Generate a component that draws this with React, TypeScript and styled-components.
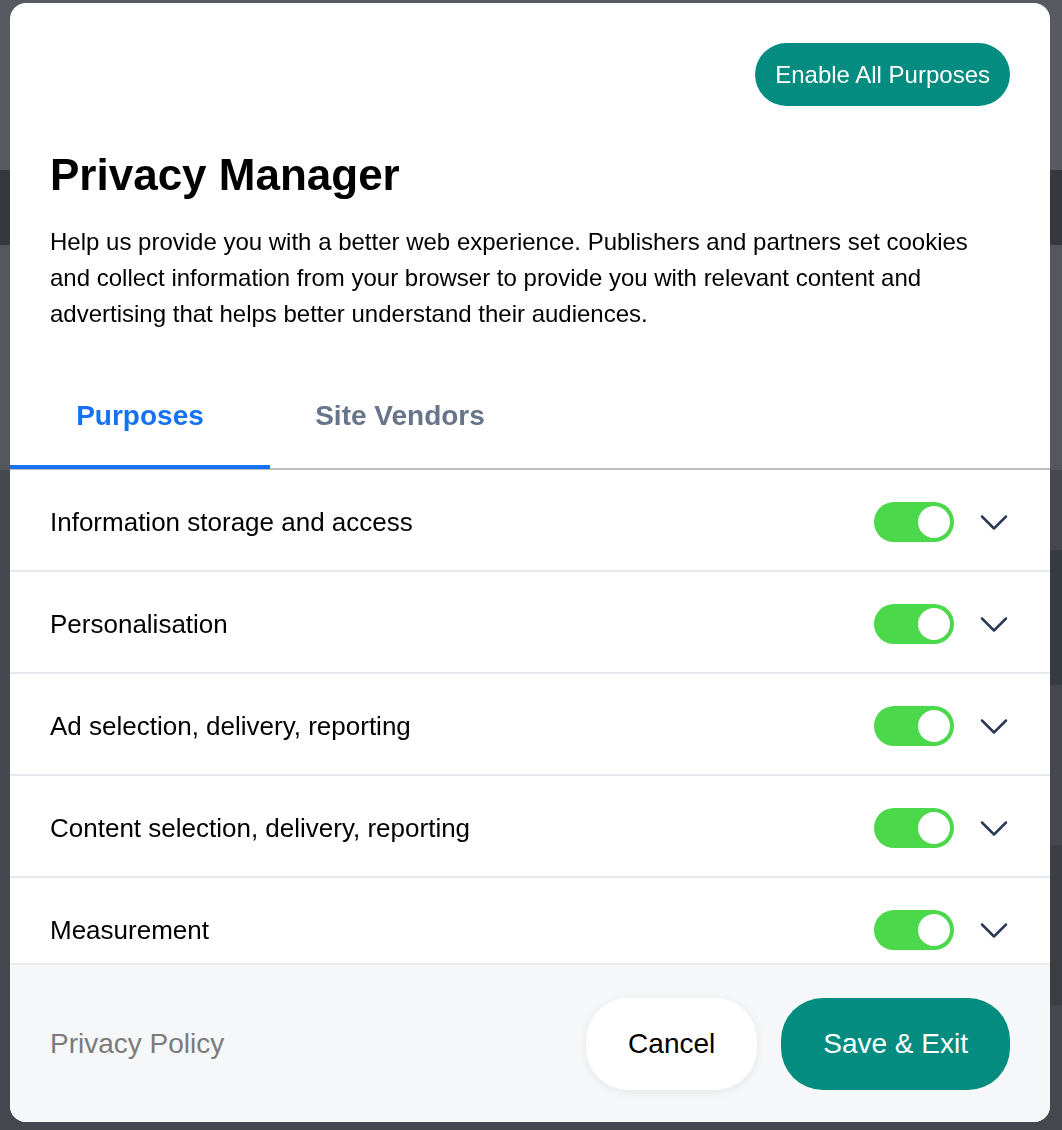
import styled, { createGlobalStyle } from "styled-components";

const GlobalStyle = createGlobalStyle`
  html, body {
    margin: 0;
    padding: 0;
    height: 100%;
  }
  body {
    font-family: "Liberation Sans", Arial, Helvetica, sans-serif;
    background: #45484e;
    overflow: hidden;
  }
  * {
    box-sizing: border-box;
  }
`;

const purposes = [
  "Information storage and access",
  "Personalisation",
  "Ad selection, delivery, reporting",
  "Content selection, delivery, reporting",
  "Measurement",
];

// page behind the dimmed overlay
const BackPage = styled.div`
  height: 1130px;
  display: flex;
  flex-direction: column;
`;

const BackTop = styled.div`
  height: 170px;
  background: #575a61;
`;

const BackNav = styled.div`
  height: 75px;
  background: #35383d;
`;

const BackHero = styled.div`
  height: 225px;
  background: #54575e;
`;

const BackContent = styled.div`
  flex: 1;
  display: flex;
  justify-content: flex-end;
  background: #45484e;
`;

const BackAside = styled.div`
  width: 60px;
  display: flex;
  flex-direction: column;
  padding-top: 80px;
  gap: 160px;
`;

const BackPhoto = styled.div<{ $h: number; $c: string }>`
  height: ${(p) => p.$h}px;
  background: ${(p) => p.$c};
`;

const Overlay = styled.div`
  position: fixed;
  inset: 0;
  padding: 3px 12px 8px 10px;
  display: flex;
`;

const Modal = styled.div`
  flex: 1;
  display: flex;
  flex-direction: column;
  background: #fff;
  border-radius: 16px;
  overflow: hidden;
  color: #000;
`;

const Header = styled.div`
  padding: 40px 40px 0;
  display: flex;
  flex-direction: column;
`;

const TopRow = styled.div`
  display: flex;
  justify-content: flex-end;
`;

const PillButton = styled.button<{ $primary?: boolean; $big?: boolean }>`
  font-family: inherit;
  border: none;
  cursor: pointer;
  height: ${(p) => (p.$big ? 92 : 63)}px;
  padding: 0 ${(p) => (p.$big ? 42 : 20)}px;
  border-radius: ${(p) => (p.$big ? 42 : 32)}px;
  font-size: ${(p) => (p.$big ? 28 : 24)}px;
  background: ${(p) => (p.$primary ? "#038c7f" : "#fff")};
  color: ${(p) => (p.$primary ? "#fff" : "#000")};
  box-shadow: ${(p) => (p.$primary ? "none" : "0 2px 10px rgba(0, 0, 0, 0.07)")};
`;

const Title = styled.h1`
  margin: 44px 0 0;
  font-size: 44px;
  font-weight: 700;
  line-height: 50px;
`;

const Intro = styled.p`
  margin: 24px 0 0;
  font-size: 24px;
  line-height: 36px;
`;

const TabBar = styled.div`
  margin-top: 44px;
  display: flex;
  border-bottom: 2px solid #bdbdbd;
`;

const Tab = styled.div<{ $active?: boolean }>`
  width: 260px;
  padding: 24px 0 33px;
  text-align: center;
  font-size: 28px;
  line-height: 32px;
  font-weight: 700;
  color: ${(p) => (p.$active ? "#1672f3" : "#677489")};
  border-bottom: 4px solid ${(p) => (p.$active ? "#1672f3" : "transparent")};
  margin-bottom: -1px;
`;

const List = styled.div`
  flex: 1;
  min-height: 0;
  overflow: hidden;
`;

const Row = styled.div`
  height: 102px;
  flex-shrink: 0;
  display: flex;
  align-items: center;
  padding: 4px 42px 0 40px;
  border-bottom: 2px solid #e5e8ec;
`;

const RowLabel = styled.span`
  flex: 1;
  font-size: 26px;
`;

const Switch = styled.div<{ $on: boolean }>`
  width: 80px;
  height: 40px;
  border-radius: 20px;
  padding: 4px;
  display: flex;
  justify-content: ${(p) => (p.$on ? "flex-end" : "flex-start")};
  background: ${(p) => (p.$on ? "#4bd84a" : "#d0d4da")};
`;

const Knob = styled.div`
  width: 32px;
  height: 32px;
  border-radius: 50%;
  background: #fff;
`;

const Chevron = styled.svg`
  margin-left: 26px;
  width: 28px;
  height: 17px;
`;

const Footer = styled.div`
  height: 159px;
  flex-shrink: 0;
  display: flex;
  align-items: center;
  gap: 24px;
  padding: 0 40px;
  background: #f6f7f9;
  border-top: 2px solid #ececec;
`;

const PolicyLink = styled.a`
  flex: 1;
  font-size: 28px;
  color: #7b7b7b;
  text-decoration: none;
`;

const App = () => {
  return (
    <>
      <GlobalStyle />
      <BackPage>
        <BackTop />
        <BackNav />
        <BackHero />
        <BackContent>
          <BackAside>
            <BackPhoto $h={135} $c="#363a41" />
            <BackPhoto $h={160} $c="#3b3e43" />
          </BackAside>
        </BackContent>
      </BackPage>
      <Overlay>
        <Modal>
          <Header>
            <TopRow>
              <PillButton $primary>Enable All Purposes</PillButton>
            </TopRow>
            <Title>Privacy Manager</Title>
            <Intro>
              Help us provide you with a better web experience. Publishers and
              partners set cookies and collect information from your browser to
              provide you with relevant content and advertising that helps better
              understand their audiences.
            </Intro>
          </Header>
          <TabBar>
            <Tab $active>Purposes</Tab>
            <Tab>Site Vendors</Tab>
          </TabBar>
          <List>
            {purposes.map((name) => (
              <Row key={name}>
                <RowLabel>{name}</RowLabel>
                <Switch $on>
                  <Knob />
                </Switch>
                <Chevron viewBox="0 0 28 17" fill="none">
                  <polyline
                    points="2,2.5 14,14.5 26,2.5"
                    stroke="#2c3a57"
                    strokeWidth="2.5"
                    strokeLinecap="round"
                    strokeLinejoin="round"
                  />
                </Chevron>
              </Row>
            ))}
          </List>
          <Footer>
            <PolicyLink href="#">Privacy Policy</PolicyLink>
            <PillButton $big>Cancel</PillButton>
            <PillButton $big $primary>
              Save &amp; Exit
            </PillButton>
          </Footer>
        </Modal>
      </Overlay>
    </>
  );
};

export default App;
